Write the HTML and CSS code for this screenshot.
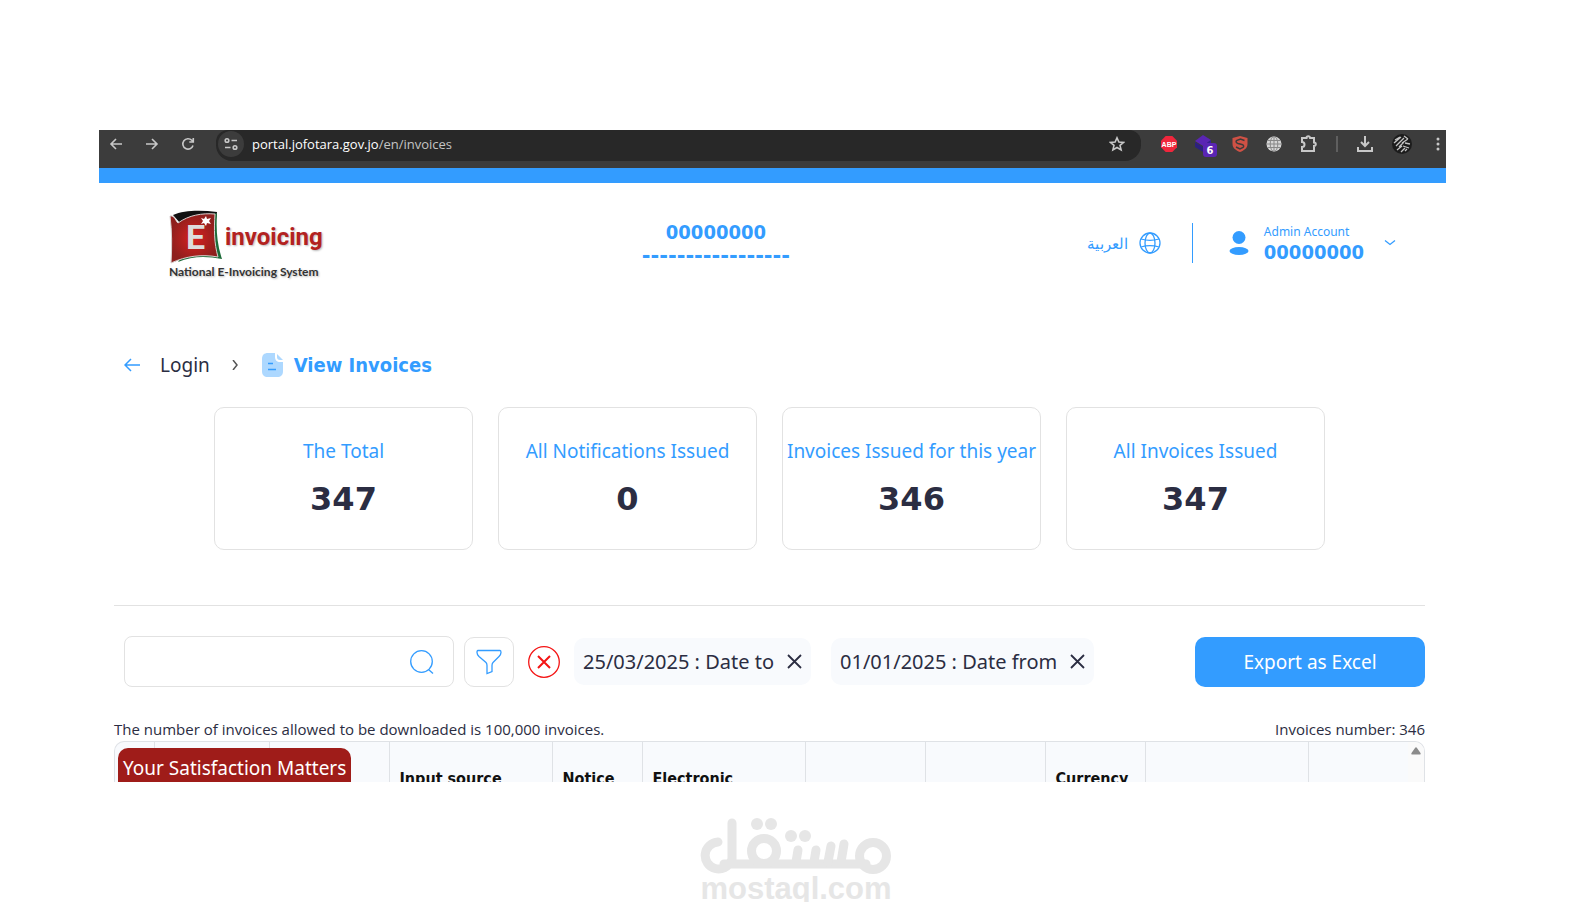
FILE: index.html
```
<!DOCTYPE html>
<html lang="en">
<head>
    <meta charset="UTF-8">
    <meta name="viewport" content="width=device-width, initial-scale=1.0">
    <title>View Invoices</title>
    <link rel="stylesheet" href="styles.css">
</head>
<body>
    <div class="window">
        <!-- Browser toolbar -->
        <div class="toolbar">
            <button class="nav-btn" aria-label="Back"><svg width="16" height="16" viewBox="0 0 16 16"><path d="M14 8H3M8 3L3 8l5 5"/></svg></button>
            <button class="nav-btn" aria-label="Forward"><svg width="16" height="16" viewBox="0 0 16 16"><path d="M2 8h11M8 3l5 5-5 5"/></svg></button>
            <button class="nav-btn" aria-label="Reload"><svg width="16" height="16" viewBox="0 0 16 16"><path d="M13 9.500a5.200 5.200 0 1 1-1.200-5.200L13 5.500M13.300 2v4h-4"/></svg></button>
            <div class="address">
                <span class="site-info"><svg width="16" height="16" viewBox="0 0 16 16"><circle cx="4" cy="4.500" r="1.800"/><path d="M8.500 4.500H14M2 11.500h5.500"/><circle cx="12" cy="11.500" r="1.800"/></svg></span>
                <span class="url">portal.jofotara.gov.jo<span class="url-path">/en/invoices</span></span>
                <button class="nav-btn star" aria-label="Bookmark"><svg width="16" height="16" viewBox="0 0 16 16"><path d="M8 1.800l1.900 4.200 4.600.400-3.500 3 1.100 4.500L8 11.500l-4.100 2.400L5 9.400l-3.500-3 4.600-.4z"/></svg></button>
            </div>
            <div class="extensions">
                <svg width="16" height="16" viewBox="0 0 16 16"><path fill="#f0263c" d="M4.700 0h6.600L16 4.700v6.600L11.300 16H4.700L0 11.300V4.700z"/><text class="abp" x="8" y="11" text-anchor="middle">ABP</text></svg>
                <svg class="cube" width="22" height="22" viewBox="0 0 22 22"><path fill="#5a25b4" d="M0 6L8 0l8 5-8 6z"/><path fill="#2c2080" d="M0 7l8 5v5l-8-5z"/><path fill="#35209a" d="M8 11l8-6v6l-8 6z"/><rect x="8" y="8" width="14" height="14" rx="3" fill="#5a25b4"/><text class="count" x="15" y="19" text-anchor="middle">6</text></svg>
                <svg width="16" height="16" viewBox="0 0 16 16"><path fill="#cf5145" d="M8 0l7.500 2v6c0 4-3.500 6.500-7.500 8C4 14.500.5 12 .5 8V2z"/><path d="M12.500 4.500L8.500 3 4.500 4.500c-1 1.500 0 2.500 1.500 3l4 1c2 .5 2 2 1 3L8 13l-4-2" stroke="#3c3c3c" stroke-width="1.500" fill="none"/></svg>
                <svg width="16" height="16" viewBox="0 0 16 16"><circle cx="8" cy="8" r="7.500" fill="#d6d6d6"/><path d="M8 0v16M0 8h16M1.500 4.500h13M1.500 11.500h13" stroke="#888" fill="none"/><ellipse cx="8" cy="8" rx="3.800" ry="7.500" stroke="#888" fill="none"/></svg>
                <svg class="line" width="18" height="18" viewBox="0 0 18 18"><path d="M2 3h4.500a1.800 1.800 0 0 1 3.600 0H14v4.500a1.800 1.800 0 0 1 0 3.600V16H2v-4a2.500 2.500 0 0 0 0-5z"/></svg>
                <span class="bar-divider"></span>
                <svg class="line" width="18" height="18" viewBox="0 0 18 18"><path d="M9 1v10M5 7l4 4 4-4M2 12v4h14v-4"/></svg>
                <svg width="20" height="20" viewBox="0 0 20 20"><circle cx="10" cy="10" r="10" fill="#1c1c1c"/><path d="M2 9l7-6M4 12l8-8M3 6l5-3M10 9l6-4M7 13l5-5M13 9l5 1M11 12l6 2M5 16l5-4M9 18l4-4M13 17l2-2M12 2l4 3" stroke="#c4c4c4" stroke-width="1.300" fill="none"/></svg>
                <svg class="dots" width="4" height="16" viewBox="0 0 4 16"><circle cx="2" cy="3" r="1.500"/><circle cx="2" cy="8" r="1.500"/><circle cx="2" cy="13" r="1.500"/></svg>
            </div>
        </div>

        <header class="header">
            <a class="logo" href="#" aria-label="E-invoicing">
                <span class="logo-row">
                    <svg width="54" height="54" viewBox="0 0 54 54">
                        <defs><radialGradient id="flag"><stop offset="0" stop-color="#d8211f"/><stop offset="1" stop-color="#8e1f1d"/></radialGradient></defs>
                        <path fill="#111" d="M4 5C15 0 32 0 48 2l-1 8-36 3z"/>
                        <path fill="#1c6b38" d="M46 3l2 1c-1 16 0 30 5 45-16-3-30-3-44 3z"/>
                        <path fill="url(#flag)" stroke="#d8d0cf" d="M1 6c5-1 6 6 8 7C20 5 33 3 46 4c-1 15-1 29 3 43-16-3-32-1-47 6C3 37 3 21 1 6z"/>
                        <path fill="#fff" d="M37 6l1 3 4-1-2 3 2 3-4-1-1 3-2-3-3 1 2-3-2-3 3 1z"/>
                        <text class="logo-e" x="17" y="39">E</text>
                    </svg>
                    <span class="logo-name">invoicing</span>
                </span>
                <span class="logo-sub">National E-Invoicing System</span>
            </a>
            <div class="company">
                <div class="account-no">00000000</div>
                <div class="dashes">-----------------</div>
            </div>
            <div class="header-right">
                <a class="lang" href="#"><span lang="ar">العربية</span>
                    <svg width="22" height="22" viewBox="0 0 22 22"><circle cx="11" cy="11" r="10"/><ellipse cx="11" cy="11" rx="5" ry="10"/><path d="M2 7c5 1.500 13 1.500 18 0M2 15c5-1.500 13-1.500 18 0"/></svg>
                </a>
                <button class="account">
                    <svg width="20" height="24" viewBox="0 0 20 24"><circle cx="10" cy="6.500" r="6.500"/><ellipse cx="10" cy="20" rx="9.500" ry="4"/></svg>
                    <span class="account-text"><span class="role">Admin Account</span><span class="account-no">00000000</span></span>
                    <svg class="chevron" width="12" height="8" viewBox="0 0 12 8"><path d="M1 1.500l5 4 5-4"/></svg>
                </button>
            </div>
        </header>

        <main class="main">
            <nav class="breadcrumb">
                <a href="#" aria-label="Back"><svg class="back" width="16" height="14" viewBox="0 0 16 14"><path d="M16 7H1M7 1L1 7l6 6"/></svg></a>
                <a class="crumb" href="#">Login</a>
                <svg class="sep" width="6" height="10" viewBox="0 0 6 10"><path d="M1 0l4 5-4 5"/></svg>
                <span class="current">
                    <svg width="22" height="24" viewBox="0 0 22 24"><path fill="#add8ff" d="M6 0h7v4c0 3 2 5 5 5h3v9c0 4-2 6-6 6H6c-4 0-6-2-6-6V6c0-4 2-6 6-6z"/><path fill="#add8ff" d="M15 1l6 6h-3c-2 0-3-1-3-3z"/><path stroke="#339cff" stroke-width="1.500" d="M6 10.500h5M6 16.500h8"/></svg>
                    View Invoices
                </span>
            </nav>

            <section class="cards">
                <div class="card"><h2>The Total</h2><p>347</p></div>
                <div class="card"><h2>All Notifications Issued</h2><p>0</p></div>
                <div class="card"><h2>Invoices Issued for this year</h2><p>346</p></div>
                <div class="card"><h2>All Invoices Issued</h2><p>347</p></div>
            </section>

            <section class="filters">
                <div class="search">
                    <input type="text" aria-label="Search invoices">
                    <svg width="24" height="24" viewBox="0 0 24 24"><circle cx="11.500" cy="11.500" r="10.800"/><path d="M18.500 19.500l4.500 4"/></svg>
                </div>
                <button class="filter-btn" aria-label="Filter"><svg width="26" height="26" viewBox="0 0 26 26"><path d="M2 1.500h22c1 0 1 1 1 2 0 2-1 3-2 4l-6 6c-1 1-1 2-1 3v6l-5 2v-8c0-1 0-2-1-3L3 7.500c-1-1-2-2-2-4 0-1 0-2 1-2z"/></svg></button>
                <button class="clear-btn" aria-label="Clear filters"><svg width="32" height="32" viewBox="0 0 32 32"><circle cx="16" cy="16" r="15.300"/><path stroke-width="2" d="M10 10l12 12M22 10L10 22"/></svg></button>
                <div class="chip">25/03/2025 : Date to <button aria-label="Remove date to"><svg width="15" height="15" viewBox="0 0 15 15"><path d="M1 1l13 13M14 1L1 14"/></svg></button></div>
                <div class="chip">01/01/2025 : Date from <button aria-label="Remove date from"><svg width="15" height="15" viewBox="0 0 15 15"><path d="M1 1l13 13M14 1L1 14"/></svg></button></div>
                <button class="export-btn">Export as Excel</button>
            </section>

            <div class="summary">
                <span>The number of invoices allowed to be downloaded is 100,000 invoices.</span>
                <span>Invoices number: 346</span>
            </div>

            <div class="table-box">
                <table>
                    <colgroup><col class="c-check"><col class="c-id"><col class="c-md"><col class="c-lg"><col class="c-sm"><col class="c-lg"><col class="c-md"><col class="c-md"><col class="c-cur"><col class="c-lg"><col></colgroup>
                    <thead>
                        <tr><th></th><th></th><th></th><th>Input source</th><th>Notice</th><th>Electronic</th><th></th><th></th><th>Currency</th><th></th><th></th></tr>
                    </thead>
                </table>
                <div class="scrollbar"><svg width="10" height="8" viewBox="0 0 10 8"><path fill="#8b8b8b" d="M4 1c.5-1 1.500-1 2 0l3.500 5c.5 1 0 1.500-1 1.500h-7c-1 0-1.500-.5-1-1.500z"/></svg></div>
                <a class="satisfaction" href="#">Your Satisfaction Matters</a>
            </div>
        </main>
    </div>

    <footer class="watermark">
        <svg width="192" height="58" viewBox="0 0 192 58" role="img" aria-label="مستقل">
            <g fill="none" stroke="#e6e6e6" stroke-width="9" stroke-linecap="round">
                <path d="M18 24a13.500 13.500 0 1 0 13 19M32 5v40M24 46h142"/>
                <circle cx="64" cy="33" r="12.500"/>
                <circle cx="173" cy="38" r="13.500"/>
                <path d="M98 32l-2 12M116 32l-2 12M131 28l-3 16M144 26l-3 18"/>
            </g>
            <g fill="#e6e6e6"><circle cx="57" cy="6" r="6"/><circle cx="71" cy="6" r="6"/><circle cx="91" cy="18" r="6"/><circle cx="105" cy="18" r="6"/></g>
        </svg>
        <span>mostaql.com</span>
    </footer>
</body>
</html>
```
FILE: styles.css
```
body {
    font-family: "Noto Sans", sans-serif;
    background-color: #fff;
    color: #2b2d42;
    margin: 0;
    padding: 130px 148px 0 99px;
}

button {
    font: inherit;
    color: inherit;
    background: none;
    border: none;
    padding: 0;
    cursor: pointer;
}

a {
    color: inherit;
    text-decoration: none;
}

svg {
    display: block;
    flex: none;
}

/* browser toolbar */
.toolbar {
    display: flex;
    align-items: flex-start;
    height: 38px;
    background: #3c3c3c;
    padding-left: 9px;
    gap: 20px;
}

.nav-btn {
    margin-top: 6px;
}

.nav-btn svg,
.site-info svg,
.line {
    fill: none;
    stroke: #c8c8c8;
    stroke-width: 2;
}

.nav-btn svg,
.site-info svg {
    stroke-width: 1.600;
}

.address {
    flex: 1;
    display: flex;
    align-items: center;
    box-sizing: border-box;
    height: 31px;
    background: #282828;
    border-radius: 12px 12px 16px 16px;
    padding: 0 16px 3px 2px;
}

.site-info {
    background: #3c3c3c;
    border-radius: 50%;
    padding: 5px;
}

.url {
    flex: 1;
    margin-left: 8px;
    font: 13px "Open Sans", sans-serif;
    color: #fff;
}

.url-path {
    color: #c4c4c4;
}

.star {
    margin: 0;
}

.extensions {
    display: flex;
    align-items: center;
    gap: 18px;
    height: 28px;
    padding-right: 6px;
}

.cube {
    margin: 4px -3px 0 0;
}

.abp {
    font: bold 7px "Liberation Sans", sans-serif;
    fill: #fff;
}

.count {
    font: bold 10px "DejaVu Sans", sans-serif;
    fill: #fff;
}

.bar-divider {
    width: 2px;
    height: 16px;
    background: #5f5f5f;
}

.dots {
    fill: #c8c8c8;
    margin-left: 6px;
}

/* page header */
.header {
    display: flex;
    justify-content: space-between;
    align-items: flex-start;
    border-top: 15px solid #339cff;
    padding: 27px 50px 0 70px;
    color: #339cff;
}

.logo {
    display: flex;
    flex-direction: column;
    width: 176px;
}

.logo-row {
    display: flex;
    align-items: center;
    gap: 2px;
}

.logo-e {
    font: bold 34px Roboto, sans-serif;
    fill: #ddd;
}

.logo-name {
    font: bold 24px/40px Roboto, sans-serif;
    color: #b3221f;
    text-shadow: 1px 1px 2px #bbb;
}

.logo-sub {
    font: bold 12px/16px Lato, sans-serif;
    color: #333;
    text-shadow: 1px 1px 2px #bbb;
}

.company {
    padding-top: 11px;
    text-align: center;
}

.account-no {
    font: bold 20px/22px "DejaVu Sans Condensed", "DejaVu Sans", sans-serif;
}

.dashes {
    font: bold 21px/26px "DejaVu Sans", sans-serif;
}

.header-right {
    display: flex;
    align-items: center;
    padding-top: 13px;
}

.lang {
    display: flex;
    align-items: center;
    gap: 11px;
    font-size: 15px;
    padding-right: 31px;
}

.lang svg,
.chevron {
    fill: none;
    stroke: #339cff;
    stroke-width: 1.300;
}

.account {
    display: flex;
    align-items: center;
    height: 40px;
    border-left: 1px solid #339cff;
    padding-left: 36px;
    text-align: left;
}

.account svg:first-child {
    fill: #339cff;
}

.account-text {
    display: flex;
    flex-direction: column;
    margin: 0 20px 0 15px;
}

.role {
    font-size: 12px;
    line-height: 18px;
}

/* main content */
.main {
    padding: 71px 21px 0 15px;
}

.breadcrumb {
    display: flex;
    align-items: center;
    height: 28px;
    font-size: 19px;
    padding-left: 10px;
}

.back,
.sep {
    fill: none;
    stroke: #339cff;
    stroke-width: 1.500;
}

.sep {
    stroke: #555;
    margin: 0 24px 0 22px;
}

.crumb {
    margin-left: 20px;
}

.current {
    display: flex;
    align-items: center;
    gap: 10px;
    color: #339cff;
    font: bold 20px "DejaVu Sans Condensed", "DejaVu Sans", sans-serif;
}

.cards {
    display: grid;
    grid-template-columns: repeat(4, minmax(0, 1fr));
    gap: 25px;
    max-width: 1111px;
    margin: 28px auto 55px;
}

.card {
    border: 1px solid #e2e2e2;
    border-radius: 10px;
    padding: 28px 0 30px;
    text-align: center;
}

.card h2 {
    margin: 0;
    font-size: 19px;
    font-weight: normal;
    line-height: 30px;
    color: #339cff;
    white-space: nowrap;
}

.card p {
    margin: 13px 0 0;
    font: bold 32px/40px "DejaVu Sans", sans-serif;
}

.filters {
    display: flex;
    align-items: center;
    border-top: 1px solid #e2e2e2;
    padding: 30px 0 0 10px;
    font-size: 19px;
}

.search {
    display: flex;
    align-items: center;
    box-sizing: border-box;
    width: 330px;
    height: 51px;
    border: 1px solid #e2e2e2;
    border-radius: 8px;
    padding-right: 19px;
}

.search input {
    flex: 1;
    min-width: 0;
    border: none;
    outline: none;
    background: none;
    font: inherit;
    padding: 0 12px;
}

.search svg,
.filter-btn svg {
    fill: none;
    stroke: #339cff;
    stroke-width: 1.300;
}

.filter-btn {
    border: 1px solid #e2e2e2;
    border-radius: 10px;
    padding: 11px;
    margin: 0 14px 0 10px;
}

.clear-btn svg {
    fill: none;
    stroke: #f41414;
    stroke-width: 1.300;
}

.chip {
    display: flex;
    align-items: center;
    gap: 13px;
    background: #f8fafd;
    border-radius: 10px;
    padding: 0 9px;
    font-size: 20px;
    line-height: 47px;
    margin-left: 14px;
    white-space: nowrap;
}

.chip + .chip {
    margin-left: 20px;
}

.chip svg {
    stroke: #2b2d42;
    stroke-width: 1.800;
}

.export-btn {
    width: 230px;
    height: 50px;
    margin-left: auto;
    border-radius: 10px;
    background: #339cff;
    color: #fff;
}

.summary {
    display: flex;
    justify-content: space-between;
    margin-top: 30px;
    font: 15px/24px "Open Sans", sans-serif;
}

/* only the top of the list is in view */
.table-box {
    position: relative;
    height: 40px;
    overflow: hidden;
    border: 1px solid #dfe2e6;
    border-bottom: none;
    border-radius: 10px 10px 0 0;
    background: #f8fafd;
}

table {
    width: 100%;
    table-layout: fixed;
    border-collapse: collapse;
}

th {
    height: 72px;
    padding: 0 10px;
    border-right: 1px solid #dfe2e6;
    text-align: left;
    color: #111;
    font: bold 16px "DejaVu Sans Condensed", "DejaVu Sans", sans-serif;
}

th:last-child {
    border-right: none;
}

.c-check { width: 39px; }
.c-id { width: 115px; }
.c-sm { width: 90px; }
.c-cur { width: 100px; }
.c-md { width: 120px; }
.c-lg { width: 163px; }

.scrollbar {
    position: absolute;
    top: 0;
    right: 0;
    bottom: 0;
    padding: 5px 3px 0;
    background: #fafafa;
}

.satisfaction {
    position: absolute;
    left: 3px;
    top: 6px;
    padding: 0 5px;
    border-radius: 10px 10px 0 0;
    background: #9f1c19;
    color: #fff;
    font-size: 19px;
    line-height: 40px;
}

.watermark {
    display: flex;
    flex-direction: column;
    align-items: center;
    padding: 36px 0 0 47px;
    font: bold 31px/26px "Liberation Sans", sans-serif;
    color: #e6e6e6;
}
```
